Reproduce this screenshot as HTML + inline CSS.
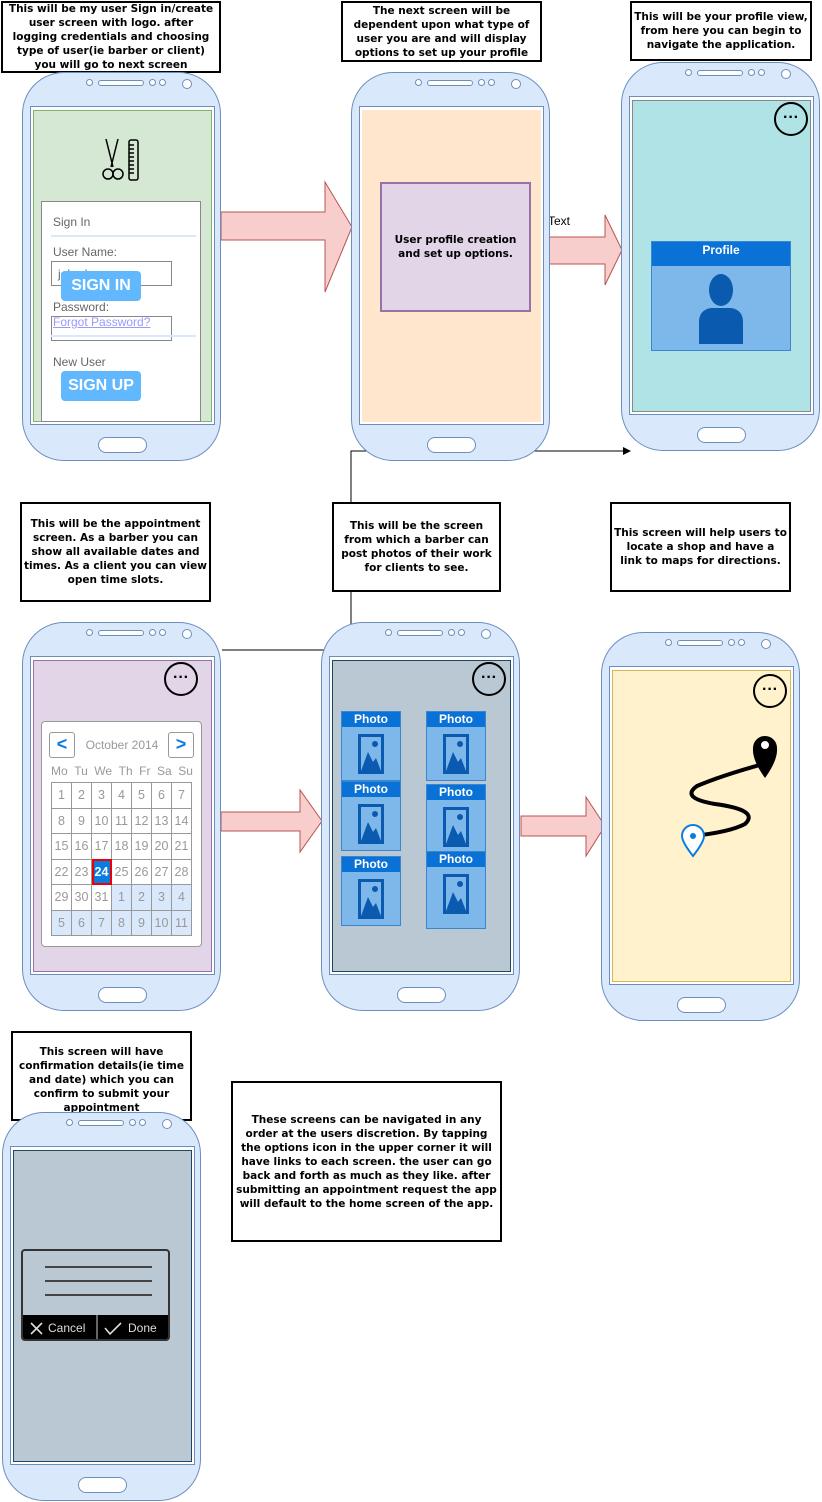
<!DOCTYPE html>
<html><head><meta charset="utf-8"><style>
body{margin:0;width:822px;height:1502px;position:relative;background:#fff;font-family:"Liberation Sans",sans-serif;overflow:hidden}
.a{position:absolute}
.ph{position:absolute;width:199px;height:389px;background:#dae8fc;border:1px solid #6c8ebf;border-radius:42px;box-sizing:border-box}
.ph .c{position:absolute;width:7px;height:7px;border:1px solid #6c8ebf;border-radius:50%;background:#fff;box-sizing:border-box}
.ph .sp{position:absolute;left:75px;top:7px;width:46px;height:6px;border:1px solid #6c8ebf;border-radius:3px;background:#fff;box-sizing:border-box}
.ph .cam{position:absolute;left:159px;top:6px;width:10px;height:10px;border:1px solid #6c8ebf;border-radius:50%;background:#fff;box-sizing:border-box}
.ph .hb{position:absolute;left:75px;top:364px;width:49px;height:16px;border:1px solid #6c8ebf;border-radius:8px;background:#fff;box-sizing:border-box}
.ph .sc{position:absolute;left:7px;top:33px;width:185px;height:319px;border:1px solid #6c8ebf;background:#fff;box-sizing:border-box}
.ph .in{position:absolute;left:2px;top:3px;right:2px;bottom:2px;border:1px solid #888}
.note{position:absolute;border:2px solid #000;background:#fff;box-sizing:border-box;font-family:"DejaVu Sans",sans-serif;font-weight:bold;font-size:10.5px;line-height:14px;text-align:center;display:flex;align-items:center;justify-content:center;padding:0 2px}
.dots{position:absolute;width:34px;height:34px;border:2px solid #000;border-radius:50%;box-sizing:border-box;text-align:center;font-size:16px;line-height:28px;font-weight:bold;background:transparent}
.photo{position:absolute;width:60px;height:70px;background:#7eb7e9;border:1px solid #3b86d0;box-sizing:border-box}
.photo .t{background:#0a72d6;color:#fff;font-weight:bold;font-size:12px;text-align:center;height:15px;line-height:15px}
.photo svg{position:absolute;left:16px;top:22px}
.cal td{width:19px;height:24.5px;border:1px solid #999;text-align:center;color:#999;font-size:12.5px;padding:0;background:#fff}
.cal td.o{background:#dae8fc}
</style></head><body>

<svg class="a" style="left:0;top:0" width="822" height="1502">
<polygon points="221,212 325,212 325,182 352,227 325,292 325,240 221,240" fill="#f8cecc" stroke="#b85450"/>
<polygon points="541,237 605,237 605,215 622,250 605,285 605,264 541,264" fill="#f8cecc" stroke="#b85450"/>
<polygon points="221,812 300,812 300,790 322,821 300,852 300,831 221,831" fill="#f8cecc" stroke="#b85450"/>
<polygon points="521,816 586,816 586,797 605,826 586,856 586,836 521,836" fill="#f8cecc" stroke="#b85450"/>
<polyline points="222,650 351,650 351,451 626,451" fill="none" stroke="#000"/>
<polygon points="631,451 623,447 623,455" fill="#000"/>
</svg>
<div class="a" style="left:548px;top:214px;font-size:12px">Text</div>

<div class="note" style="left:1px;top:1px;width:220px;height:72px">This will be my user Sign in/create user screen with logo. after logging credentials and choosing type of user(ie barber or client) you will go to next screen</div>
<div class="note" style="left:341px;top:1px;width:201px;height:61px">The next screen will be dependent upon what type of user you are and will display options to set up your profile</div>
<div class="note" style="left:630px;top:1px;width:182px;height:60px">This will be your profile view, from here you can begin to navigate the application.</div>
<div class="note" style="left:20px;top:502px;width:191px;height:100px">This will be the appointment screen. As a barber you can show all available dates and times. As a client you can view open time slots.</div>
<div class="note" style="left:332px;top:502px;width:169px;height:90px">This will be the screen from which a barber can post photos of their work for clients to see.</div>
<div class="note" style="left:610px;top:502px;width:181px;height:90px">This screen will help users to locate a shop and have a link to maps for directions.</div>
<div class="note" style="left:11px;top:1031px;width:181px;height:90px;align-items:flex-start;padding-top:12px">This screen will have confirmation details(ie time and date) which you can confirm to submit your appointment</div>
<div class="note" style="left:231px;top:1081px;width:271px;height:161px">These screens can be navigated in any order at the users discretion. By tapping the options icon in the upper corner it will have links to each screen. the user can go back and forth as much as they like. after submitting an appointment request the app will default to the home screen of the app.</div>

<!-- phone 1 -->
<div class="ph" style="left:22px;top:72px"><div class="c" style="left:63px;top:6px"></div><div class="sp"></div><div class="c" style="left:126px;top:6px"></div><div class="c" style="left:136px;top:6px"></div><div class="cam"></div><div class="hb"></div>
<div class="sc"><div class="in" style="background:#d5e8d4;border-color:#82b366"></div></div></div>
<svg class="a" style="left:100px;top:137px" width="42" height="46"><g fill="none" stroke="#000" stroke-width="1.5"><path d="M6 2 L13 30 M18 2 L11 30"/><circle cx="8" cy="37" r="5"/><circle cx="18" cy="37" r="5"/><rect x="29" y="3" width="9" height="40" rx="2"/><path d="M29 8h5M29 12h5M29 16h5M29 20h5M29 24h5M29 28h5M29 32h5M29 36h5"/></g></svg>
<div class="a" style="left:41px;top:201px;width:160px;height:221px;background:#fff;border:1px solid #888;box-sizing:border-box"></div>
<div class="a" style="left:53px;top:215px;font-size:12px;color:#666">Sign In</div>
<div class="a" style="left:51px;top:235px;width:145px;height:2px;background:#dae8fc"></div>
<div class="a" style="left:53px;top:245px;font-size:12px;color:#666">User Name:</div>
<div class="a" style="left:51px;top:261px;width:121px;height:25px;border:1px solid #888;box-sizing:border-box;font-size:12px;color:#666;padding:5px 6px">johndoe</div>
<div class="a" style="left:61px;top:271px;width:80px;height:30px;background:#62b8ff;border-radius:4px;color:#fff;font-weight:bold;font-size:16px;text-align:center;line-height:30px">SIGN IN</div>
<div class="a" style="left:53px;top:300px;font-size:12px;color:#666">Password:</div>
<div class="a" style="left:51px;top:316px;width:121px;height:25px;border:1px solid #888;box-sizing:border-box"></div>
<div class="a" style="left:51px;top:335px;width:145px;height:2px;background:#dae8fc"></div>
<div class="a" style="left:53px;top:315px;font-size:12px;color:#99f;text-decoration:underline">Forgot Password?</div>
<div class="a" style="left:53px;top:355px;font-size:12px;color:#666">New User</div>
<div class="a" style="left:61px;top:371px;width:80px;height:30px;background:#62b8ff;border-radius:4px;color:#fff;font-weight:bold;font-size:16px;text-align:center;line-height:30px">SIGN UP</div>

<!-- phone 2 -->
<div class="ph" style="left:351px;top:72px"><div class="c" style="left:63px;top:6px"></div><div class="sp"></div><div class="c" style="left:126px;top:6px"></div><div class="c" style="left:136px;top:6px"></div><div class="cam"></div><div class="hb"></div>
<div class="sc"><div class="in" style="background:#ffe6cc;border-width:0"></div></div></div>
<div class="a" style="left:380px;top:182px;width:151px;height:130px;background:#e1d5e7;border:2px solid #9673a6;box-sizing:border-box;display:flex;align-items:center;justify-content:center;text-align:center;font-family:'DejaVu Sans',sans-serif;font-weight:bold;font-size:10.5px;line-height:14px">User profile creation and set up options.</div>

<!-- phone 3 -->
<div class="ph" style="left:621px;top:62px"><div class="c" style="left:63px;top:6px"></div><div class="sp"></div><div class="c" style="left:126px;top:6px"></div><div class="c" style="left:136px;top:6px"></div><div class="cam"></div><div class="hb"></div>
<div class="sc"><div class="in" style="background:#b0e3e6;border-color:#888"></div></div></div>
<div class="dots" style="left:774px;top:102px">···</div>
<div class="a" style="left:651px;top:241px;width:140px;height:110px;background:#7eb7e9;border:1px solid #3b86d0;box-sizing:border-box"><div style="background:#0a72d6;color:#fff;font-weight:bold;font-size:12px;text-align:center;height:24px;line-height:16px">Profile</div></div>
<svg class="a" style="left:697px;top:272px" width="48" height="72"><ellipse cx="24" cy="18" rx="12" ry="16" fill="#0a5ab0"/><path d="M2 72 L2 50 Q2 38 14 36 L34 36 Q46 38 46 50 L46 72Z" fill="#0a5ab0"/></svg>

<!-- phone 4 calendar -->
<div class="ph" style="left:22px;top:622px"><div class="c" style="left:63px;top:6px"></div><div class="sp"></div><div class="c" style="left:126px;top:6px"></div><div class="c" style="left:136px;top:6px"></div><div class="cam"></div><div class="hb"></div>
<div class="sc"><div class="in" style="background:#e1d5e7;border-color:#9673a6"></div></div></div>
<div class="dots" style="left:164px;top:662px">···</div>
<div class="a" style="left:41px;top:721px;width:161px;height:226px;background:#fff;border:1px solid #999;border-radius:4px;box-sizing:border-box"></div>
<div class="a" style="left:49px;top:732px;width:26px;height:26px;border:1px solid #999;border-radius:3px;box-sizing:border-box;color:#0a7be0;font-weight:bold;font-size:18px;text-align:center;line-height:22px">&lt;</div>
<div class="a" style="left:168px;top:732px;width:26px;height:26px;border:1px solid #999;border-radius:3px;box-sizing:border-box;color:#0a7be0;font-weight:bold;font-size:18px;text-align:center;line-height:22px">&gt;</div>
<div class="a" style="left:76px;top:738px;width:92px;text-align:center;font-size:12px;color:#999">October 2014</div>
<div class="a" style="left:51px;top:764px;width:142px;display:flex;justify-content:space-between;font-size:12px;color:#999"><span>Mo</span><span>Tu</span><span>We</span><span>Th</span><span>Fr</span><span>Sa</span><span>Su</span></div>
<table class="cal a" style="left:51px;top:782px;border-collapse:collapse">
<tr><td>1</td><td>2</td><td>3</td><td>4</td><td>5</td><td>6</td><td>7</td></tr>
<tr><td>8</td><td>9</td><td>10</td><td>11</td><td>12</td><td>13</td><td>14</td></tr>
<tr><td>15</td><td>16</td><td>17</td><td>18</td><td>19</td><td>20</td><td>21</td></tr>
<tr><td>22</td><td>23</td><td style="background:#0a7be0;color:#fff;font-weight:bold;outline:2px solid #e00;outline-offset:-2px">24</td><td>25</td><td>26</td><td>27</td><td>28</td></tr>
<tr><td>29</td><td>30</td><td>31</td><td class="o">1</td><td class="o">2</td><td class="o">3</td><td class="o">4</td></tr>
<tr><td class="o">5</td><td class="o">6</td><td class="o">7</td><td class="o">8</td><td class="o">9</td><td class="o">10</td><td class="o">11</td></tr>
</table>

<!-- phone 5 photos -->
<div class="ph" style="left:321px;top:622px"><div class="c" style="left:63px;top:6px"></div><div class="sp"></div><div class="c" style="left:126px;top:6px"></div><div class="c" style="left:136px;top:6px"></div><div class="cam"></div><div class="hb"></div>
<div class="sc"><div class="in" style="background:#bac8d3;border-color:#23445d"></div></div></div>
<div class="dots" style="left:472px;top:662px">···</div>
<div class="photo" style="left:341px;top:711px"><div class="t">Photo</div><svg width="26" height="40"><rect x="1.5" y="1.5" width="23" height="37" fill="none" stroke="#0a5ab0" stroke-width="3"/><circle cx="17" cy="10" r="3" fill="#0a5ab0"/><path d="M3 37 L10 18 L15 28 L18 24 L23 37Z" fill="#0a5ab0"/></svg></div>
<div class="photo" style="left:426px;top:711px"><div class="t">Photo</div><svg width="26" height="40"><rect x="1.5" y="1.5" width="23" height="37" fill="none" stroke="#0a5ab0" stroke-width="3"/><circle cx="17" cy="10" r="3" fill="#0a5ab0"/><path d="M3 37 L10 18 L15 28 L18 24 L23 37Z" fill="#0a5ab0"/></svg></div>
<div class="photo" style="left:341px;top:781px"><div class="t">Photo</div><svg width="26" height="40"><rect x="1.5" y="1.5" width="23" height="37" fill="none" stroke="#0a5ab0" stroke-width="3"/><circle cx="17" cy="10" r="3" fill="#0a5ab0"/><path d="M3 37 L10 18 L15 28 L18 24 L23 37Z" fill="#0a5ab0"/></svg></div>
<div class="photo" style="left:426px;top:784px"><div class="t">Photo</div><svg width="26" height="40"><rect x="1.5" y="1.5" width="23" height="37" fill="none" stroke="#0a5ab0" stroke-width="3"/><circle cx="17" cy="10" r="3" fill="#0a5ab0"/><path d="M3 37 L10 18 L15 28 L18 24 L23 37Z" fill="#0a5ab0"/></svg></div>
<div class="photo" style="left:341px;top:856px"><div class="t">Photo</div><svg width="26" height="40"><rect x="1.5" y="1.5" width="23" height="37" fill="none" stroke="#0a5ab0" stroke-width="3"/><circle cx="17" cy="10" r="3" fill="#0a5ab0"/><path d="M3 37 L10 18 L15 28 L18 24 L23 37Z" fill="#0a5ab0"/></svg></div>
<div class="photo" style="left:426px;top:851px;height:78px"><div class="t">Photo</div><svg width="26" height="40"><rect x="1.5" y="1.5" width="23" height="37" fill="none" stroke="#0a5ab0" stroke-width="3"/><circle cx="17" cy="10" r="3" fill="#0a5ab0"/><path d="M3 37 L10 18 L15 28 L18 24 L23 37Z" fill="#0a5ab0"/></svg></div>

<!-- phone 6 map -->
<div class="ph" style="left:601px;top:632px"><div class="c" style="left:63px;top:6px"></div><div class="sp"></div><div class="c" style="left:126px;top:6px"></div><div class="c" style="left:136px;top:6px"></div><div class="cam"></div><div class="hb"></div>
<div class="sc"><div class="in" style="background:#fff2cc;border-color:#d6b656"></div></div></div>
<div class="dots" style="left:753px;top:674px">···</div>
<svg class="a" style="left:675px;top:728px" width="110" height="135">
<path d="M88 36 Q45 48 22 58 Q5 70 40 76 Q85 82 70 96 Q55 104 18 108" fill="none" stroke="#000" stroke-width="4"/>
<path d="M90 50 Q77 32 78 20 A12 12 0 0 1 102 20 Q103 32 90 50Z" fill="#000"/><circle cx="90" cy="17" r="4" fill="#fff"/>
<path d="M18 128 Q7 114 7 108 A11 11 0 0 1 29 108 Q29 114 18 128Z" fill="#fff" stroke="#0a7be0" stroke-width="2"/><circle cx="18" cy="108" r="3" fill="#0a7be0"/>
</svg>

<!-- phone 7 confirm -->
<div class="ph" style="left:2px;top:1112px"><div class="c" style="left:63px;top:6px"></div><div class="sp"></div><div class="c" style="left:126px;top:6px"></div><div class="c" style="left:136px;top:6px"></div><div class="cam"></div><div class="hb"></div>
<div class="sc"><div class="in" style="background:#bac8d3;border-color:#23445d"></div></div></div>
<div class="a" style="left:21px;top:1249px;width:149px;height:92px;border:2px solid #333;border-radius:4px;background:#bac8d3;box-sizing:border-box;overflow:hidden">
<div class="a" style="left:22px;top:15px;width:107px;height:2px;background:#444"></div>
<div class="a" style="left:22px;top:29px;width:107px;height:2px;background:#444"></div>
<div class="a" style="left:22px;top:43px;width:107px;height:2px;background:#444"></div>
<div class="a" style="left:0;top:64px;width:149px;height:28px;background:#000"></div>
<div class="a" style="left:73px;top:64px;width:2px;height:26px;background:#666"></div>
<div class="a" style="left:25px;top:70px;color:#ddd;font-size:12px">Cancel</div>
<div class="a" style="left:105px;top:70px;color:#ddd;font-size:12px">Done</div>
<svg class="a" style="left:6px;top:70px" width="20" height="16"><path d="M2 2l11 11M13 2L2 13" stroke="#ddd" stroke-width="1.6"/></svg>
<svg class="a" style="left:80px;top:70px" width="20" height="16"><path d="M2 7l5 6 11-11" fill="none" stroke="#ddd" stroke-width="1.6"/></svg>
</div>

</body></html>
